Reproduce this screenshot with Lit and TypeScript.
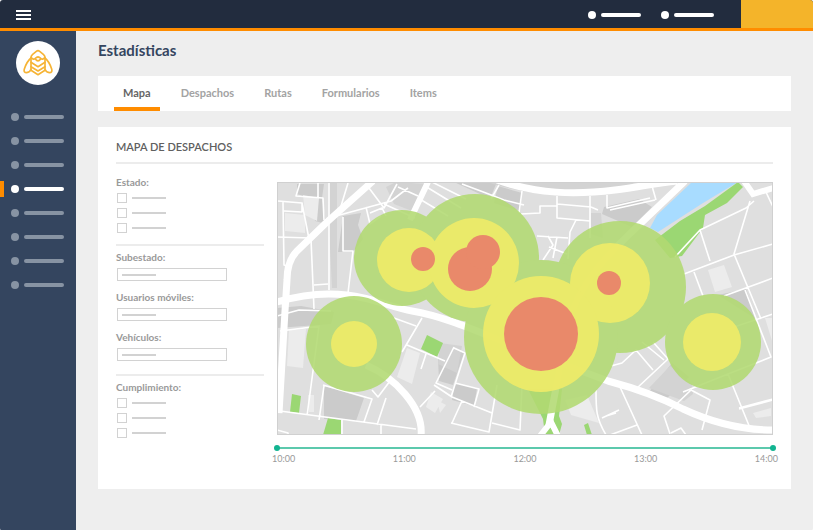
import { LitElement, html, css, svg } from "lit";
import { customElement } from "lit/decorators.js";

type Spot = [number, number, number];

const LOW: Spot[] = [
  [402, 258, 48], [475, 258, 64], [620, 287, 66],
  [541, 337, 77], [354, 344, 48], [713, 342, 48],
];
const MEDIUM: Spot[] = [
  [409, 260, 32], [474, 263, 45], [610, 283, 40],
  [541, 334, 58], [354, 344, 23], [712, 342, 29],
];
const HIGH: Spot[] = [
  [423, 259, 12], [470, 269, 22], [483, 252, 17],
  [541, 334, 37], [609, 283, 12],
];

const spots = (list: Spot[]) =>
  list.map(([x, y, r]) => svg`<circle cx=${x} cy=${y} r=${r}></circle>`);

@customElement("heat-map")
class HeatMap extends LitElement {
  static styles = css`
    :host { display: block; }
    .map { display: block; width: 100%; height: auto; background: #dfdfdf; }
    .block { fill: #cbcbcb; }
    .shade { fill: #d3d3d3; }
    .building { fill: #ececec; }
    .park { fill: #9bd773; }
    .water { fill: #a8dcff; }
    .street { fill: none; stroke: #fff; stroke-width: 1.6; stroke-linejoin: round; }
    .avenue { fill: none; stroke: #fff; stroke-width: 7; stroke-linejoin: round; }
    .road { fill: none; stroke: #fff; stroke-width: 6; }
    .low { fill: #b2da72; opacity: 0.88; }
    .medium { fill: #eeeb69; opacity: 0.94; }
    .high { fill: #e9866a; opacity: 0.96; }
    .frame { fill: none; stroke: #d0d0d0; }
  `;

  render() {
    return html`
      <svg class="map" viewBox="277 182 496 253" role="img" aria-label="Mapa de despachos">
        <path class="block" d="M297 184h27l-2 14 4 26-11-3-4-22-14-5zM343 216l18-3-3 12 5 14-10 13h-15zM454 182h43l-6 14-9-1zM498 186l24 7-2 18-26-8zM604 207l35-8 13 8-20 20-30-13zM277 308l24-2 33 6-3 12-54 4zM324 386l40 12-8 23-32-2zM438 359l16-11 10 5-11 32-14-4zM455 383l22 5-3 18-22-6zM672 363l17 14-25 24-15-9zM718 295l28-6 10 30z" />
        <path class="shade" d="M328 182h9v106h-5l-3-60zM386 187l10-5 30 2-14 27-18-7zM487 182h150l-22 9c-45 8-92 3-128-9zM440 343l22 3-5 27-19-9zM591 213l10 0 2 25-12-4zM670 366l22 18 1 10-9 7-35-13z" />
        <path class="building" d="M303 195l16 3-2 23-12-6zM285 213l20 2v18l-20-2zM289 330l17-1-3 39-16-2zM407 348l13 5-8 31-15-7zM431 392l12 7-8 14-9-6zM708 270l16-5 8 22-17 5zM753 413l18-5v8l-15 2zM565 400l22-5 12 28-28-8zM765 318h8v26zM308 395h6v17h-5zM437 400l9 5-6 8z" />
        <path class="water" d="M692 182h46l-35 21-45 29-8-4 7-13z" />
        <path class="park" d="M738 182l5 5-16 16-22 12-2 13-21 28-12 2-15-18 25-19 25-15zM427 335l16 8-6 14-16-8zM292 394l9 2-2 17-9-1zM328 418l13 2v15h-18zM528 389l34 0-3 27 3 8-3 11h-14l-2-16zM584 425l4-2 4 12h-5z" />
        <path class="street" d="M283 202l1 63 7 3M278 201l24 2v9l-18-1M302 203l7 36M277 237l34 1M300 183l-4 13 27 2 1 22M318 183v15M329 183v107M311 239l3 70M314 285l14-1M348 183l-10 33M366 184l18 24 13-24M336 216l55-15 17-13M343 217v34h10l-5 42M366 207l4 17 11-8M370 213l12-5 4 8M384 204l31 14M398 187l20 9M432 182l34 17M425 186l36 22M418 198l30 18M462 184l24 9 18 7 20 5M499 185l-8 14M522 191l-3 22M521 214l19-1v-7h17M557 196v22l33 3M557 204l34 3M576 220l-6 12-2 27M590 196v42M537 236l31 2M548 236l5 9-10 15M557 237l-4 21M549 247l18 7M591 207l7 3M607 195v13l43-10M610 210l45-10M652 186l4 14M675 257l25-27 46-22 8-7M700 230l10 31M684 274l50-19 39-11M750 201l-16 53 27 65M694 272l9 24M724 296l49-18M765 190l8 17M773 314l-45 15M745 290l26 67-43 17-45 18M653 342l15 17-32 30M611 366l11-3 14-13 17 20M642 342l22 18M728 374l22 54M691 390l19 10-8 30M691 390l-27 26 6 18M620 387l22 48M610 435l27-10M671 433l10-5 5 7M606 416l10-3M277 316l22-6 32 1M280 331l40-5M319 326l-12 90M324 386l-5 34M280 411l45 6 91 12M323 385l49 14-8 23M372 390l6 7 12-16M386 398l-9 27M422 318l-20 34M394 318l22 8M407 345l38 16M426 354l-5 15M454 347l-18 36 16 7M454 348l11 5-14 44M420 407l15-16M434 385l18 12 40 16M455 383l24 6-5 18M452 423l10-22M497 385l-8 47-38-9M492 423l28 7 2-45M596 390c0 20 0 28 10 45M602 418l17-8M381 425v10M277 430l11 3v2M342 420v15" />
        <path class="avenue" d="M373 181l-46 41-30 29q-10 10-10 29l-2 31-6 102M277 302c20-6 45-10 70-7 27 3 46 13 65 16 30 5 60 18 90 30l106 40c30 8 52 16 75 28 30 14 58 21 90 21M366 365c28 12 58 42 55 71M497 180c40 14 78 15 118 10 25-3 40-7 62-9M685 181l-47 45c-30 28-59 57-70 98l-19 101" />
        <path class="road" d="M428 182l-18 38M540 436l11-14 7 14M744 181l9 13 20-6" />
        <path class="street" d="M739 409l34-9M739 408l34-9" />
        <g class="low">${spots(LOW)}</g>
        <g class="medium">${spots(MEDIUM)}</g>
        <g class="high">${spots(HIGH)}</g>
        <rect class="frame" x="277.5" y="182.5" width="495" height="252" />
      </svg>
    `;
  }
}

@customElement("app-root")
class AppRoot extends LitElement {
  static styles = css`
    :host {
      display: flex;
      flex-direction: column;
      min-height: 100vh;
      overflow: hidden;
      border-radius: 3px;
      background: #eee;
      font-family: Lato, "Liberation Sans", sans-serif;
      color: #999;
    }
    * { box-sizing: border-box; }
    h1, h2 { margin: 0; }
    button, input { margin: 0; padding: 0; border: 0; background: none; font: inherit; }

    .topbar {
      display: flex;
      height: 31px;
      background: #222c3e;
      border-bottom: 3px solid #ff8c00;
    }
    .menu {
      display: grid;
      align-content: center;
      gap: 2px;
      width: 15px;
      margin-left: 16px;
      padding-top: 2px;
    }
    .menu-line { height: 2px; background: #fff; }
    .shortcuts { display: flex; gap: 20px; margin-left: auto; padding: 2px 27px 0 0; }
    .shortcut { display: flex; align-items: center; gap: 5px; }
    .shortcut-dot { width: 8px; height: 8px; border-radius: 50%; background: #fff; }
    .shortcut-bar { width: 40px; height: 4px; border-radius: 2px; background: #fff; }
    .account { width: 72px; background: #f4b42a; }

    .body { display: flex; flex: 1; }
    .sidebar { width: 76px; padding-top: 10px; background: #34455f; }
    .logo {
      display: grid;
      place-items: center;
      width: 44px;
      height: 44px;
      margin: 0 auto;
      border-radius: 50%;
      background: #fff;
    }
    .bee { display: block; width: 30px; height: 28px; }
    .nav { margin-top: 20px; }
    .nav-item {
      display: flex;
      align-items: center;
      gap: 5px;
      height: 24px;
      padding-left: 11px;
      position: relative;
      color: #8793a3;
    }
    .nav-item.active { color: #fff; }
    .nav-item.active::before {
      content: "";
      position: absolute;
      left: 0;
      width: 4px;
      height: 16px;
      background: #ff8c00;
    }
    .nav-dot { width: 8px; height: 8px; border-radius: 50%; background: currentColor; }
    .nav-bar { width: 40px; height: 4px; border-radius: 2px; background: currentColor; }

    .main { flex: 1; min-width: 0; padding: 9px 22px 42px; }
    .title { font-size: 15px; line-height: 20px; color: #34455f; }
    .tabs {
      display: flex;
      gap: 12px;
      height: 35px;
      margin-top: 16px;
      padding-left: 16px;
      background: #fff;
    }
    .tab {
      padding: 2px 9px 0;
      border-bottom: 4px solid transparent;
      font-size: 11px;
      font-weight: 700;
      color: #a3a3a3;
    }
    .tab.active { color: #666; border-color: #ff8c00; }

    .panel { margin-top: 16px; padding: 0 18px 24px; background: #fff; }
    .panel-title {
      padding: 12px 0 7px;
      border-bottom: 2px solid #ececec;
      font-size: 11px;
      line-height: 16px;
      font-weight: 600;
      color: #606060;
    }
    .panel-body { display: flex; gap: 13px; }
    .filters { width: 148px; padding-top: 7px; }
    .group { padding: 5px 0 11px; }
    .group + .group { border-top: 2px solid #ececec; }
    .caption { display: block; font-size: 10px; line-height: 12px; font-weight: 700; }
    .options { display: grid; gap: 5px; margin-top: 5px; }
    .option { display: flex; align-items: center; gap: 5px; padding-left: 1px; }
    .check {
      appearance: none;
      width: 10px;
      height: 10px;
      border: 1px solid #d2d2d2;
    }
    .check:checked { background: #d2d2d2; }
    .option-bar { width: 34px; height: 2px; background: #d2d2d2; }
    .fields { display: grid; gap: 10px; padding-bottom: 13px; }
    .field {
      display: block;
      width: 110px;
      height: 13px;
      margin: 5px 0 0 1px;
      border: 1px solid #d2d2d2;
      font-size: 10px;
      color: #999;
    }
    .field:placeholder-shown {
      background: linear-gradient(#d2d2d2, #d2d2d2) 4px 5px / 34px 2px no-repeat;
    }

    .view { flex: 1; min-width: 0; padding-top: 18px; }
    .range { display: grid; margin: 10px -3px 0; }
    .slider {
      grid-area: 1 / 1;
      appearance: none;
      width: 100%;
      height: 6px;
      pointer-events: none;
    }
    .slider.from { background: linear-gradient(#5cc9ad, #5cc9ad) center / calc(100% - 6px) 2px no-repeat; }
    .slider::-webkit-slider-thumb {
      appearance: none;
      width: 6px;
      height: 6px;
      border-radius: 50%;
      background: #12b491;
      pointer-events: auto;
    }
    .hours {
      display: flex;
      justify-content: space-between;
      margin: 2px -5px 0;
      font-size: 9px;
      line-height: 12px;
    }
  `;

  private tabs = ["Mapa", "Despachos", "Rutas", "Formularios", "Items"];
  private hours = ["10:00", "11:00", "12:00", "13:00", "14:00"];
  private fields = [
    { id: "substate", label: "Subestado:" },
    { id: "users", label: "Usuarios móviles:" },
    { id: "vehicles", label: "Vehículos:" },
  ];

  private checks(name: string) {
    return html`
      <div class="group" role="group" aria-label=${name}>
        <span class="caption">${name}</span>
        <div class="options">
          ${[1, 2, 3].map(
            (n) => html`
              <label class="option">
                <input class="check" type="checkbox" aria-label="${name} ${n}" />
                <span class="option-bar"></span>
              </label>
            `
          )}
        </div>
      </div>
    `;
  }

  render() {
    return html`
      <header class="topbar">
        <button class="menu" aria-label="Menú">
          <span class="menu-line"></span><span class="menu-line"></span><span class="menu-line"></span>
        </button>
        <div class="shortcuts">
          ${[1, 2].map(
            (n) => html`
              <a class="shortcut" href="#" aria-label="Acceso ${n}">
                <span class="shortcut-dot"></span><span class="shortcut-bar"></span>
              </a>
            `
          )}
        </div>
        <button class="account" aria-label="Cuenta"></button>
      </header>
      <div class="body">
        <aside class="sidebar">
          <div class="logo">
            <svg class="bee" viewBox="0 0 90 84" fill="none" stroke="#f6b436" stroke-width="5" stroke-linejoin="round" stroke-linecap="round" aria-hidden="true">
              <path d="M24 64V26Q24 20 29 16L40 7Q45 3 50 7L61 16Q66 20 66 26V64L45 77z" />
              <path d="M24 25Q31 34 37 28Q45 20 53 28Q59 34 66 25M37 30Q45 41 53 30" />
              <path d="M24 40L45 53 66 40M24 53L45 66 66 53" />
              <path d="M24 27Q11 38 4 60Q1 71 11 71Q21 70 24 61M66 27Q79 38 86 60Q89 71 79 71Q69 70 66 61" />
            </svg>
          </div>
          <nav class="nav">
            ${[1, 2, 3, 4, 5, 6, 7, 8].map(
              (n) => html`
                <a class="nav-item ${n === 4 ? "active" : ""}" href="#" aria-label="Sección ${n}">
                  <span class="nav-dot"></span><span class="nav-bar"></span>
                </a>
              `
            )}
          </nav>
        </aside>
        <main class="main">
          <h1 class="title">Estadísticas</h1>
          <div class="tabs" role="tablist">
            ${this.tabs.map(
              (name, i) => html`
                <button class="tab ${i === 0 ? "active" : ""}" role="tab" aria-selected=${i === 0}>${name}</button>
              `
            )}
          </div>
          <section class="panel">
            <h2 class="panel-title">MAPA DE DESPACHOS</h2>
            <div class="panel-body">
              <form class="filters">
                ${this.checks("Estado:")}
                <div class="group fields">
                  ${this.fields.map(
                    (f) => html`
                      <div>
                        <label class="caption" for=${f.id}>${f.label}</label>
                        <input class="field" id=${f.id} type="text" placeholder=" " />
                      </div>
                    `
                  )}
                </div>
                ${this.checks("Cumplimiento:")}
              </form>
              <div class="view">
                <heat-map></heat-map>
                <div class="range">
                  <input class="slider from" type="range" min="10" max="14" .value=${"10"} aria-label="Desde" />
                  <input class="slider" type="range" min="10" max="14" .value=${"14"} aria-label="Hasta" />
                </div>
                <div class="hours">${this.hours.map((h) => html`<span>${h}</span>`)}</div>
              </div>
            </div>
          </section>
        </main>
      </div>
    `;
  }
}
